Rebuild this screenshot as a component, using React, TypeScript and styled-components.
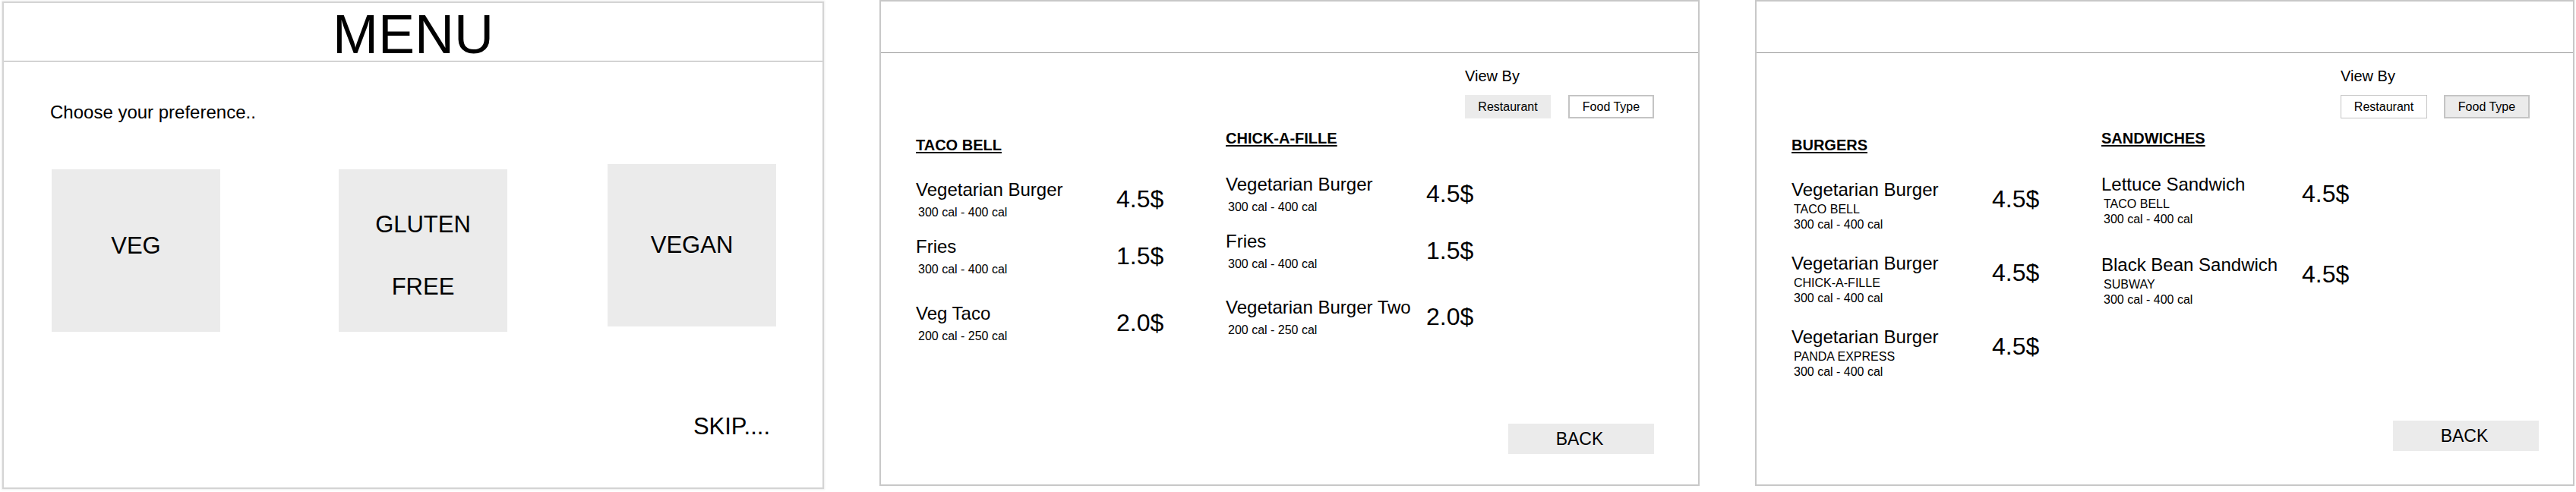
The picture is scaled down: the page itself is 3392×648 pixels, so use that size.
import React from "react";
import styled, { createGlobalStyle } from "styled-components";

const GlobalStyle = createGlobalStyle`
  html, body {
    margin: 0;
    padding: 0;
    background: #ffffff;
  }
  body {
    font-family: "Liberation Sans", Arial, Helvetica, sans-serif;
    color: #000000;
  }
  * { box-sizing: border-box; }
`;

const Page = styled.div`
  display: flex;
  align-items: flex-start;
  gap: 73px;
  padding-left: 3px;
  width: 3392px;
  height: 648px;
  overflow: hidden;
`;

const Frame = styled.section<{ $w: number; $h: number; $top?: number; $soft?: boolean }>`
  flex: none;
  width: ${(p) => p.$w}px;
  height: ${(p) => p.$h}px;
  margin-top: ${(p) => p.$top ?? 0}px;
  display: flex;
  flex-direction: column;
  background: #ffffff;
  border: 2px solid ${(p) => (p.$soft ? "#d4d4d4" : "#c8c8c8")};
  box-shadow: ${(p) => (p.$soft ? "0 0 2px 1px rgba(0,0,0,0.08)" : "none")};
`;

const TitleBar = styled.header<{ $h: number; $line: string }>`
  flex: none;
  height: ${(p) => p.$h + 1}px;
  border-bottom: 1px solid ${(p) => p.$line};
  display: flex;
  justify-content: center;
  align-items: flex-start;
`;

const Title = styled.h1`
  margin: 5px 0 0;
  font-size: 72px;
  line-height: 72px;
  font-weight: 400;
`;

/* ---------- Preference screen ---------- */

const PreferenceBody = styled.div`
  flex: 1;
  display: flex;
  flex-direction: column;
  padding: 53px 0 0 61px;
`;

const Prompt = styled.p`
  margin: 0;
  font-size: 24px;
  line-height: 28px;
`;

const ChoiceRow = styled.div`
  display: flex;
  align-items: flex-start;
  margin-top: 54px;
  padding-left: 2px;
`;

const ChoiceCard = styled.button<{ $ml: number; $mt: number; $shift: number }>`
  flex: none;
  width: 222px;
  height: 214px;
  margin-left: ${(p) => p.$ml}px;
  margin-top: ${(p) => p.$mt}px;
  padding: ${(p) => (p.$shift > 0 ? `${p.$shift}px 0 0` : `0 0 ${-p.$shift}px`)};
  border: none;
  background: #ebebeb;
  display: flex;
  flex-direction: column;
  align-items: center;
  justify-content: center;
  gap: 46px;
  font-family: inherit;
  color: #000;
`;

const ChoiceLabel = styled.span`
  font-size: 31px;
  line-height: 36px;
`;

const SkipLink = styled.a`
  align-self: flex-end;
  margin: 107px 69px 0 0;
  font-size: 31px;
  line-height: 36px;
  color: #000;
  text-decoration: none;
`;

/* ---------- Menu list screens ---------- */

const ListBody = styled.div`
  flex: 1;
  display: flex;
  flex-direction: column;
  padding: 19px 0 0 46px;
`;

const Toolbar = styled.div`
  margin-left: 723px;
  display: flex;
  flex-direction: column;
`;

const ViewByLabel = styled.span`
  font-size: 20px;
  line-height: 23px;
`;

const ToggleGroup = styled.div<{ $gap: number }>`
  display: flex;
  gap: ${(p) => p.$gap}px;
  margin-top: 13px;
`;

const Toggle = styled.button<{ $active?: boolean; $edge: number; $w: number }>`
  width: ${(p) => p.$w}px;
  height: 31px;
  padding: 0;
  font-family: inherit;
  font-size: 16px;
  color: #000;
  background: ${(p) => (p.$active ? "#ebebeb" : "#ffffff")};
  border: ${(p) => (p.$edge ? `${p.$edge}px solid #c4c4c4` : "none")};
  display: flex;
  align-items: center;
  justify-content: center;
`;

const Columns = styled.div`
  display: flex;
  margin-top: 15px;
`;

const Column = styled.div<{ $mt: number }>`
  flex: none;
  width: 408px;
  margin-top: ${(p) => p.$mt}px;
  display: flex;
  flex-direction: column;
`;

const ColumnTitle = styled.h2`
  margin: 0;
  font-size: 20px;
  line-height: 23px;
  font-weight: 700;
  text-decoration: underline;
  text-underline-offset: 2px;
`;

const Item = styled.div<{ $mt: number }>`
  display: flex;
  align-items: flex-start;
  margin-top: ${(p) => p.$mt}px;
`;

const ItemInfo = styled.div`
  flex: none;
  width: 264px;
  display: flex;
  flex-direction: column;
`;

const ItemName = styled.span`
  font-size: 24px;
  line-height: 28px;
  white-space: nowrap;
`;

const ItemMeta = styled.span<{ $mt: number; $lh: number }>`
  font-size: 16px;
  line-height: ${(p) => p.$lh}px;
  margin-top: ${(p) => p.$mt}px;
  padding-left: 3px;
  white-space: nowrap;
`;

const Price = styled.span`
  margin-top: 8px;
  font-size: 32px;
  line-height: 37px;
`;

const BackButton = styled.button<{ $mr: number; $mb: number }>`
  align-self: flex-end;
  margin: auto ${(p) => p.$mr}px ${(p) => p.$mb}px 0;
  width: 192px;
  height: 40px;
  border: none;
  background: #ebebeb;
  font-family: inherit;
  font-size: 23px;
  color: #000;
  padding: 0 4px 0 0;
`;

/* ---------- data ---------- */

type Dish = { name: string; place?: string; cal: string; price: string; mt: number };
type Group = { title: string; mt: number; items: Dish[] };

const byRestaurant: Group[] = [
  {
    title: "TACO BELL",
    mt: 9,
    items: [
      { name: "Vegetarian Burger", cal: "300 cal - 400 cal", price: "4.5$", mt: 33 },
      { name: "Fries", cal: "300 cal - 400 cal", price: "1.5$", mt: 22 },
      { name: "Veg Taco", cal: "200 cal - 250 cal", price: "2.0$", mt: 35 },
    ],
  },
  {
    title: "CHICK-A-FILLE",
    mt: 0,
    items: [
      { name: "Vegetarian Burger", cal: "300 cal - 400 cal", price: "4.5$", mt: 35 },
      { name: "Fries", cal: "300 cal - 400 cal", price: "1.5$", mt: 22 },
      { name: "Vegetarian Burger Two", cal: "200 cal - 250 cal", price: "2.0$", mt: 34 },
    ],
  },
];

const byFoodType: Group[] = [
  {
    title: "BURGERS",
    mt: 9,
    items: [
      { name: "Vegetarian Burger", place: "TACO BELL", cal: "300 cal - 400 cal", price: "4.5$", mt: 33 },
      { name: "Vegetarian Burger", place: "CHICK-A-FILLE", cal: "300 cal - 400 cal", price: "4.5$", mt: 27 },
      { name: "Vegetarian Burger", place: "PANDA EXPRESS", cal: "300 cal - 400 cal", price: "4.5$", mt: 27 },
    ],
  },
  {
    title: "SANDWICHES",
    mt: 0,
    items: [
      { name: "Lettuce Sandwich", place: "TACO BELL", cal: "300 cal - 400 cal", price: "4.5$", mt: 35 },
      { name: "Black Bean Sandwich", place: "SUBWAY", cal: "300 cal - 400 cal", price: "4.5$", mt: 36 },
    ],
  },
];

function MenuList({
  groups,
  mode,
  backRight,
  backBottom,
}: {
  groups: Group[];
  mode: "restaurant" | "food";
  backRight: number;
  backBottom: number;
}) {
  const food = mode === "food";
  return (
    <ListBody>
      <Toolbar>
        <ViewByLabel>View By</ViewByLabel>
        <ToggleGroup $gap={food ? 22 : 23}>
          <Toggle $w={food ? 114 : 113} $active={!food} $edge={food ? 1 : 0}>
            Restaurant
          </Toggle>
          <Toggle $w={113} $active={food} $edge={2}>
            Food Type
          </Toggle>
        </ToggleGroup>
      </Toolbar>
      <Columns>
        {groups.map((g) => (
          <Column key={g.title} $mt={g.mt}>
            <ColumnTitle>{g.title}</ColumnTitle>
            {g.items.map((d, i) => (
              <Item key={i} $mt={d.mt}>
                <ItemInfo>
                  <ItemName>{d.name}</ItemName>
                  {d.place ? (
                    <>
                      <ItemMeta $mt={2} $lh={20}>{d.place}</ItemMeta>
                      <ItemMeta $mt={0} $lh={20}>{d.cal}</ItemMeta>
                    </>
                  ) : (
                    <ItemMeta $mt={7} $lh={18}>{d.cal}</ItemMeta>
                  )}
                </ItemInfo>
                <Price>{d.price}</Price>
              </Item>
            ))}
          </Column>
        ))}
      </Columns>
      <BackButton $mr={backRight} $mb={backBottom}>BACK</BackButton>
    </ListBody>
  );
}

export default function App() {
  return (
    <>
      <GlobalStyle />
      <Page>
        <Frame $w={1082} $h={642} $top={2} $soft>
          <TitleBar $h={76} $line="#a8a8a8">
            <Title>MENU</Title>
          </TitleBar>
          <PreferenceBody>
            <Prompt>Choose your preference..</Prompt>
            <ChoiceRow>
              <ChoiceCard $ml={0} $mt={7} $shift={-13}>
                <ChoiceLabel>VEG</ChoiceLabel>
              </ChoiceCard>
              <ChoiceCard $ml={156} $mt={7} $shift={13}>
                <ChoiceLabel>GLUTEN</ChoiceLabel>
                <ChoiceLabel>FREE</ChoiceLabel>
              </ChoiceCard>
              <ChoiceCard $ml={132} $mt={0} $shift={-1}>
                <ChoiceLabel>VEGAN</ChoiceLabel>
              </ChoiceCard>
            </ChoiceRow>
            <SkipLink href="#">SKIP....</SkipLink>
          </PreferenceBody>
        </Frame>

        <Frame $w={1080} $h={640}>
          <TitleBar $h={67} $line="#999999" />
          <MenuList groups={byRestaurant} mode="restaurant" backRight={58} backBottom={40} />
        </Frame>

        <Frame $w={1079} $h={640}>
          <TitleBar $h={67} $line="#999999" />
          <MenuList groups={byFoodType} mode="food" backRight={45} backBottom={44} />
        </Frame>
      </Page>
    </>
  );
}
